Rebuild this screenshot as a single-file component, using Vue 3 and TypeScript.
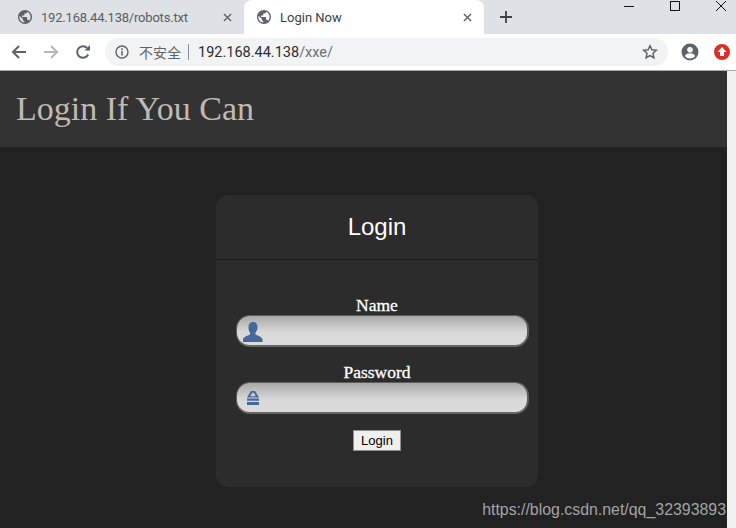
<script setup lang="ts">
import { ref } from 'vue';

interface Tab {
  id: string;
  title: string;
}

const tabs = ref<Tab[]>([
  { id: 'robots', title: '192.168.44.138/robots.txt' },
  { id: 'login', title: 'Login Now' },
]);

const activeTabId = ref('login');
const username = ref('');
const password = ref('');
</script>

<template>
  <div class="browser">
    <div class="tab-strip">
      <div
        v-for="tab in tabs"
        :key="tab.id"
        class="tab"
        :class="{ active: tab.id === activeTabId }"
      >
        <svg class="globe" viewBox="2 2 20 20">
          <path d="M12 2C6.480 2 2 6.480 2 12s4.480 10 10 10 10-4.480 10-10S17.520 2 12 2zm-1 17.930c-3.950-.490-7-3.850-7-7.930 0-.620.080-1.210.210-1.790L9 15v1c0 1.100.900 2 2 2v1.930zm6.900-2.540c-.260-.810-1-1.390-1.900-1.390h-1v-3c0-.550-.450-1-1-1H8v-2h2c.550 0 1-.450 1-1V7h2c1.100 0 2-.900 2-2v-.410c2.930 1.190 5 4.060 5 7.410 0 2.080-.800 3.970-2.100 5.390z" fill="#5f6368" />
        </svg>
        <span class="tab-title">{{ tab.title }}</span>
        <svg class="tab-close" viewBox="0 0 10 10">
          <path d="M1 1l8 8M9 1l-8 8" stroke="#5f6368" stroke-width="1.600" />
        </svg>
      </div>
      <svg class="new-tab" viewBox="0 0 12 12">
        <path d="M6 0v12M0 6h12" stroke="#3c4043" stroke-width="1.800" />
      </svg>
      <div class="window-controls">
        <svg class="win-btn" viewBox="0 0 12 12"><path d="M1 6.500h10" stroke="#111" /></svg>
        <svg class="win-btn" viewBox="0 0 12 12"><rect x="1.500" y="1.500" width="9" height="9" fill="none" stroke="#111" /></svg>
        <svg class="win-btn" viewBox="0 0 12 12"><path d="M1 1l10 10M11 1L1 11" stroke="#111" /></svg>
      </div>
    </div>

    <div class="toolbar">
      <svg class="nav-icon" viewBox="0 0 16 16">
        <path d="M15 8H2M8 2L2 8l6 6" fill="none" stroke="#5f6368" stroke-width="2" />
      </svg>
      <svg class="nav-icon" viewBox="0 0 16 16">
        <path d="M1 8h13M8 2l6 6-6 6" fill="none" stroke="#b4b6b9" stroke-width="2" />
      </svg>
      <svg class="nav-icon" viewBox="0 0 16 16">
        <path d="M13.200 10.500A5.800 5.800 0 1 1 12.200 4" fill="none" stroke="#5f6368" stroke-width="2" />
        <path d="M9.500 6.500H15V1z" fill="#5f6368" />
      </svg>
      <div class="omnibox">
        <svg class="info-icon" viewBox="0 0 14 14">
          <circle cx="7" cy="7" r="6" fill="none" stroke="#5f6368" stroke-width="1.400" />
          <path d="M7 6v4.500M7 3.300v1.600" stroke="#5f6368" stroke-width="1.600" />
        </svg>
        <span class="not-secure">不安全</span>
        <span class="divider"></span>
        <span class="url"><span class="host">192.168.44.138</span>/xxe/</span>
        <svg class="star" viewBox="0 0 16 16">
          <path d="M8 1.800l1.900 4 4.400.5-3.300 3 .900 4.400L8 11.500l-3.900 2.200.900-4.400-3.300-3 4.400-.5z" fill="none" stroke="#5f6368" stroke-width="1.500" />
        </svg>
      </div>
      <svg class="profile" viewBox="0 0 18 18">
        <circle cx="9" cy="9" r="8.500" fill="#5f6368" />
        <circle cx="9" cy="6.800" r="2.800" fill="#fff" />
        <path d="M3.800 13c1-2 3-2.700 5.200-2.700s4.200.7 5.200 2.700a6.500 6.500 0 0 1-10.400 0z" fill="#fff" />
      </svg>
      <svg class="update" viewBox="0 0 16 16">
        <circle cx="8" cy="8" r="8" fill="#d93025" />
        <path d="M8 3l4.500 5H10v4H6V8H3.500z" fill="#fff" />
      </svg>
    </div>

    <div class="viewport">
      <main class="page">
        <header class="page-header">
          <h1>Login If You Can</h1>
        </header>
        <form class="card" @submit.prevent>
          <h2 class="card-title">Login</h2>
          <div class="fields">
            <label class="field">
              <span class="field-label">Name</span>
              <span class="input-wrap">
                <svg class="field-icon" viewBox="0 0 20 20">
                  <path d="M10 0c3 0 4.500 2.200 4.500 5s-1 4.500-2 5.500v2c2 1 6 2 7 4.500v3H0v-3c1-2.500 5-3.500 7-4.500v-2C6 9.500 5.500 8 5.500 5S7 0 10 0z" fill="#44689a" />
                </svg>
                <input v-model="username" type="text" />
              </span>
            </label>
            <label class="field">
              <span class="field-label">Password</span>
              <span class="input-wrap">
                <svg class="field-icon lock" viewBox="0 0 12 14">
                  <path d="M0 6.600L3 1.500a3.400 3.400 0 0 1 6 0L12 6.600zM3.200 5.200h5.600L7.300 2.400a1.600 1.600 0 0 0-2.600 0z" fill="#44689a" fill-rule="evenodd" />
                  <path d="M0 7.600h12v2.100H0zM0 11h12v3H0z" fill="#44689a" />
                </svg>
                <input v-model="password" type="password" />
              </span>
            </label>
          </div>
          <button class="submit" type="submit">Login</button>
        </form>
      </main>
      <div class="scrollbar"></div>
      <span class="watermark">https://blog.csdn.net/qq_32393893</span>
    </div>
  </div>
</template>

<style>
html,
body {
  margin: 0;
  overflow: hidden;
}
</style>

<style scoped>
.browser {
  width: 736px;
  height: 528px;
  display: flex;
  flex-direction: column;
  overflow: hidden;
  font-family: "Roboto", "Noto Sans CJK SC", sans-serif;
}

/* Tab strip */
.tab-strip {
  height: 34px;
  flex: none;
  display: flex;
  align-items: flex-end;
  background-color: #dee1e6;
  padding-left: 8px;
  position: relative;
}

.tab {
  width: 236px;
  height: 34px;
  box-sizing: border-box;
  padding: 0 10px;
  display: flex;
  align-items: center;
  font-size: 13px;
  letter-spacing: -0.2px;
  color: #5a5d61;
}

.tab.active {
  width: 240px;
  padding-left: 13px;
  background-color: #fff;
  border-radius: 8px 8px 0 0;
  letter-spacing: 0;
  color: #3c4043;
}

.globe {
  width: 14px;
  height: 14px;
  flex: none;
  margin-right: 9px;
}

.tab-title {
  flex: 1;
  white-space: nowrap;
}

.tab-close {
  width: 9px;
  height: 9px;
  flex: none;
  margin-right: 2px;
}

.new-tab {
  width: 12px;
  height: 12px;
  margin: 0 0 11px 16px;
}

.window-controls {
  position: absolute;
  top: 0;
  right: 9px;
  display: flex;
  gap: 34px;
}

.win-btn {
  width: 12px;
  height: 12px;
}

/* Address bar */
.toolbar {
  height: 36px;
  flex: none;
  box-sizing: border-box;
  display: flex;
  align-items: center;
  padding: 0 5px 0 11px;
  background-color: #fff;
}

.nav-icon {
  width: 16px;
  height: 16px;
  flex: none;
  margin-right: 16px;
}

.omnibox {
  width: 563px;
  height: 28px;
  flex: none;
  margin-left: -2px;
  box-sizing: border-box;
  padding: 0 10px;
  display: flex;
  align-items: center;
  background-color: #f1f3f4;
  border-radius: 14px;
}

.info-icon {
  width: 14px;
  height: 14px;
  flex: none;
  margin-right: 10px;
}

.not-secure {
  font-size: 14px;
  color: #5f6368;
}

.divider {
  width: 1px;
  height: 16px;
  margin: 0 9px 0 7px;
  background-color: #8a8d91;
}

.url {
  flex: 1;
  font-size: 14.500px;
  color: #6d7175;
}

.host {
  color: #2c2d30;
}

.star {
  width: 16px;
  height: 16px;
  flex: none;
}

.profile {
  width: 18px;
  height: 18px;
  flex: none;
  margin-left: 13px;
}

.update {
  width: 16px;
  height: 16px;
  flex: none;
  margin-left: 15px;
}

/* Page */
.viewport {
  flex: 1;
  min-height: 0;
  display: flex;
  position: relative;
  border-top: 1px solid #a9a9a9;
}

.page {
  flex: 1;
  min-width: 0;
  background-color: #222;
}

.scrollbar {
  width: 9px;
  flex: none;
  background-color: #f1f1f1;
}

.page-header {
  height: 76px;
  box-sizing: border-box;
  padding: 0 16px;
  display: flex;
  align-items: center;
  background-color: #333;
}

.page-header h1 {
  margin: 0;
  font-family: "Liberation Serif", serif;
  font-size: 34px;
  font-weight: 400;
  color: #bfbab3;
  white-space: nowrap;
}

.card {
  width: 322px;
  height: 292px;
  box-sizing: border-box;
  margin: 48px 0 0 216px;
  background-color: #2c2c2c;
  border-radius: 12px;
  display: flex;
  flex-direction: column;
  align-items: center;
}

.card-title {
  width: 100%;
  height: 65px;
  flex: none;
  margin: 0;
  box-sizing: border-box;
  padding-bottom: 1px;
  display: flex;
  align-items: center;
  justify-content: center;
  border-bottom: 1px solid #1a1a1a;
  font-family: "Liberation Sans", sans-serif;
  font-size: 24px;
  font-weight: 400;
  color: #fff;
}

.fields {
  width: 100%;
  margin-top: 36px;
  display: flex;
  flex-direction: column;
  gap: 16px;
}

.field {
  display: flex;
  flex-direction: column;
  align-items: center;
}

.field-label {
  height: 19px;
  line-height: 19px;
  font-family: "Liberation Serif", serif;
  font-size: 17.500px;
  -webkit-text-stroke: 0.3px #fff;
  color: #fff;
}

.input-wrap {
  width: 293px;
  margin-left: 11px;
  position: relative;
  display: block;
}

.input-wrap input {
  display: block;
  width: 100%;
  height: 32px;
  box-sizing: border-box;
  padding: 0 34px;
  border: 1px solid #5e5e5e;
  border-right-width: 2px;
  border-bottom: 2px solid #666;
  border-radius: 14px;
  outline: none;
  background: linear-gradient(#a8a8a8, #d8d8d8 55%, #dcdcdc);
}

.field-icon {
  position: absolute;
  left: 7px;
  top: 7px;
  width: 20px;
  height: 20px;
  z-index: 1;
}

.field-icon.lock {
  left: 11px;
  top: 9px;
  width: 12px;
  height: 14px;
}

.submit {
  width: 48px;
  height: 21px;
  margin-top: 16px;
  padding: 0;
  border: 1px solid #8f8f8f;
  border-radius: 0;
  background-color: #efefef;
  font-family: "Liberation Sans", sans-serif;
  font-size: 13px;
  color: #000;
}

.watermark {
  position: absolute;
  right: 10px;
  bottom: 9px;
  font-family: "Liberation Sans", sans-serif;
  font-size: 15.900px;
  color: #a3a3a3;
  white-space: nowrap;
}
</style>
